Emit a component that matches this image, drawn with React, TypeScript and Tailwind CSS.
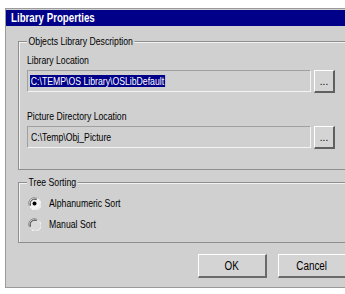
import React from "react";

const FONT = { fontFamily: '"Liberation Sans Narrow", "Liberation Sans", Arial, sans-serif' };

function T({ children, className = "" }: { children: React.ReactNode; className?: string }) {
  return <span className={"inline-block whitespace-nowrap origin-left scale-x-[0.79] " + className}>{children}</span>;
}

function Radio({ checked }: { checked: boolean }) {
  return (
    <svg width="13" height="13" viewBox="0 0 13 13" className="shrink-0">
      <circle cx="6.5" cy="6.5" r="6" fill={checked ? "#f2f2f2" : "#dadada"} />
      <path d="M1.4 9.2 A5.7 5.7 0 0 1 9.2 1.4" fill="none" stroke="#8a8a8a" strokeWidth="1" />
      <path d="M2.5 8.6 A4.6 4.6 0 0 1 8.6 2.5" fill="none" stroke="#3c3c3c" strokeWidth="1" />
      <path d="M3.8 11.8 A5.7 5.7 0 0 0 11.8 3.8" fill="none" stroke="#ffffff" strokeWidth="1" />
      {checked && <circle cx="6.5" cy="6.5" r="2" fill="#000" />}
    </svg>
  );
}

function BrowseButton() {
  return (
    <div className="w-[21px] h-[23px] shrink-0 bg-[#d4d4d4] border-t border-l border-t-white border-l-white border-b-2 border-r-2 border-b-[#606060] border-r-[#606060] flex items-end justify-center pb-[5px] text-[10px] leading-[8px] text-black">
      ...
    </div>
  );
}

export default function App() {
  return (
    <div className="w-[345px] h-[294px] bg-white overflow-hidden pt-[8px] pl-[5px]" style={FONT}>
      <div className="w-[360px] h-[280px] bg-[#d0d0d0] border-l border-t border-b border-[#9a9a9a] pt-[1px] flex flex-col">
        <div className="h-[16px] bg-[#000088] text-white font-bold text-[12px] leading-[16px] pl-[5px]">
          <T className="scale-x-[0.81]">Library Properties</T>
        </div>

        {/* Objects Library Description group */}
        <div className="relative mt-[15px] ml-[12px] h-[129px] border border-[#8e8e8e] shadow-[inset_1px_1px_0_#f2f2f2] pl-[8px] pt-[12px]">
          <span className="absolute left-[8px] top-[-7px] text-[11px] leading-[13px] text-black">
            <T className="bg-[#d0d0d0] px-[2px]">Objects Library Description</T>
          </span>
          <div className="text-[11px] leading-[13px] text-black">
            <T>Library Location</T>
          </div>
          <div className="flex items-start gap-[3px] mt-[3px]">
            <div className="w-[284px] h-[22px] border-t border-l border-t-[#a0a0a0] border-l-[#a0a0a0] border-b border-r border-b-[#f4f4f4] border-r-[#f4f4f4] flex items-center pl-[2px]">
              <T className="bg-[#000088] text-white text-[11px] leading-[12px] px-[1px]">C:\TEMP\OS Library\OSLibDefault</T>
            </div>
            <BrowseButton />
          </div>
          <div className="text-[11px] leading-[13px] text-black mt-[17px]">
            <T>Picture Directory Location</T>
          </div>
          <div className="flex items-start gap-[3px] mt-[3px]">
            <div className="w-[284px] h-[22px] border-t border-l border-t-[#a0a0a0] border-l-[#a0a0a0] border-b border-r border-b-[#f4f4f4] border-r-[#f4f4f4] flex items-center pl-[3px] text-[11px] leading-[13px] text-black">
              <T>C:\Temp\Obj_Picture</T>
            </div>
            <BrowseButton />
          </div>
        </div>

        {/* Tree Sorting group */}
        <div className="relative mt-[12px] ml-[12px] h-[61px] border border-[#8e8e8e] shadow-[inset_1px_1px_0_#f2f2f2] pl-[9px] pt-[14px] flex flex-col gap-[9px]">
          <span className="absolute left-[8px] top-[-7px] text-[11px] leading-[13px] text-black">
            <T className="bg-[#d0d0d0] px-[2px]">Tree Sorting</T>
          </span>
          <div className="flex items-center gap-[8px] h-[12px]">
            <Radio checked />
            <span className="text-[11px] leading-[13px] text-black">
              <T>Alphanumeric Sort</T>
            </span>
          </div>
          <div className="flex items-center gap-[8px] h-[12px]">
            <Radio checked={false} />
            <span className="text-[11px] leading-[13px] text-black">
              <T>Manual Sort</T>
            </span>
          </div>
        </div>

        <div className="flex gap-[11px] mt-[11px] ml-[192px]">
          <div className="w-[69px] h-[24px] shrink-0 bg-[#d4d4d4] border-t border-l border-t-white border-l-white border-b-2 border-r-2 border-b-[#6a6a6a] border-r-[#6a6a6a] flex items-center justify-center text-[12px] leading-[14px] text-black">
            <span className="inline-block origin-center scale-x-[0.82]">OK</span>
          </div>
          <div className="w-[69px] h-[24px] shrink-0 bg-[#d4d4d4] border-t border-l border-t-white border-l-white border-b-2 border-r-2 border-b-[#6a6a6a] border-r-[#6a6a6a] flex items-center justify-center text-[12px] leading-[14px] text-black">
            <span className="inline-block origin-center scale-x-[0.82]">Cancel</span>
          </div>
        </div>
      </div>
    </div>
  );
}
